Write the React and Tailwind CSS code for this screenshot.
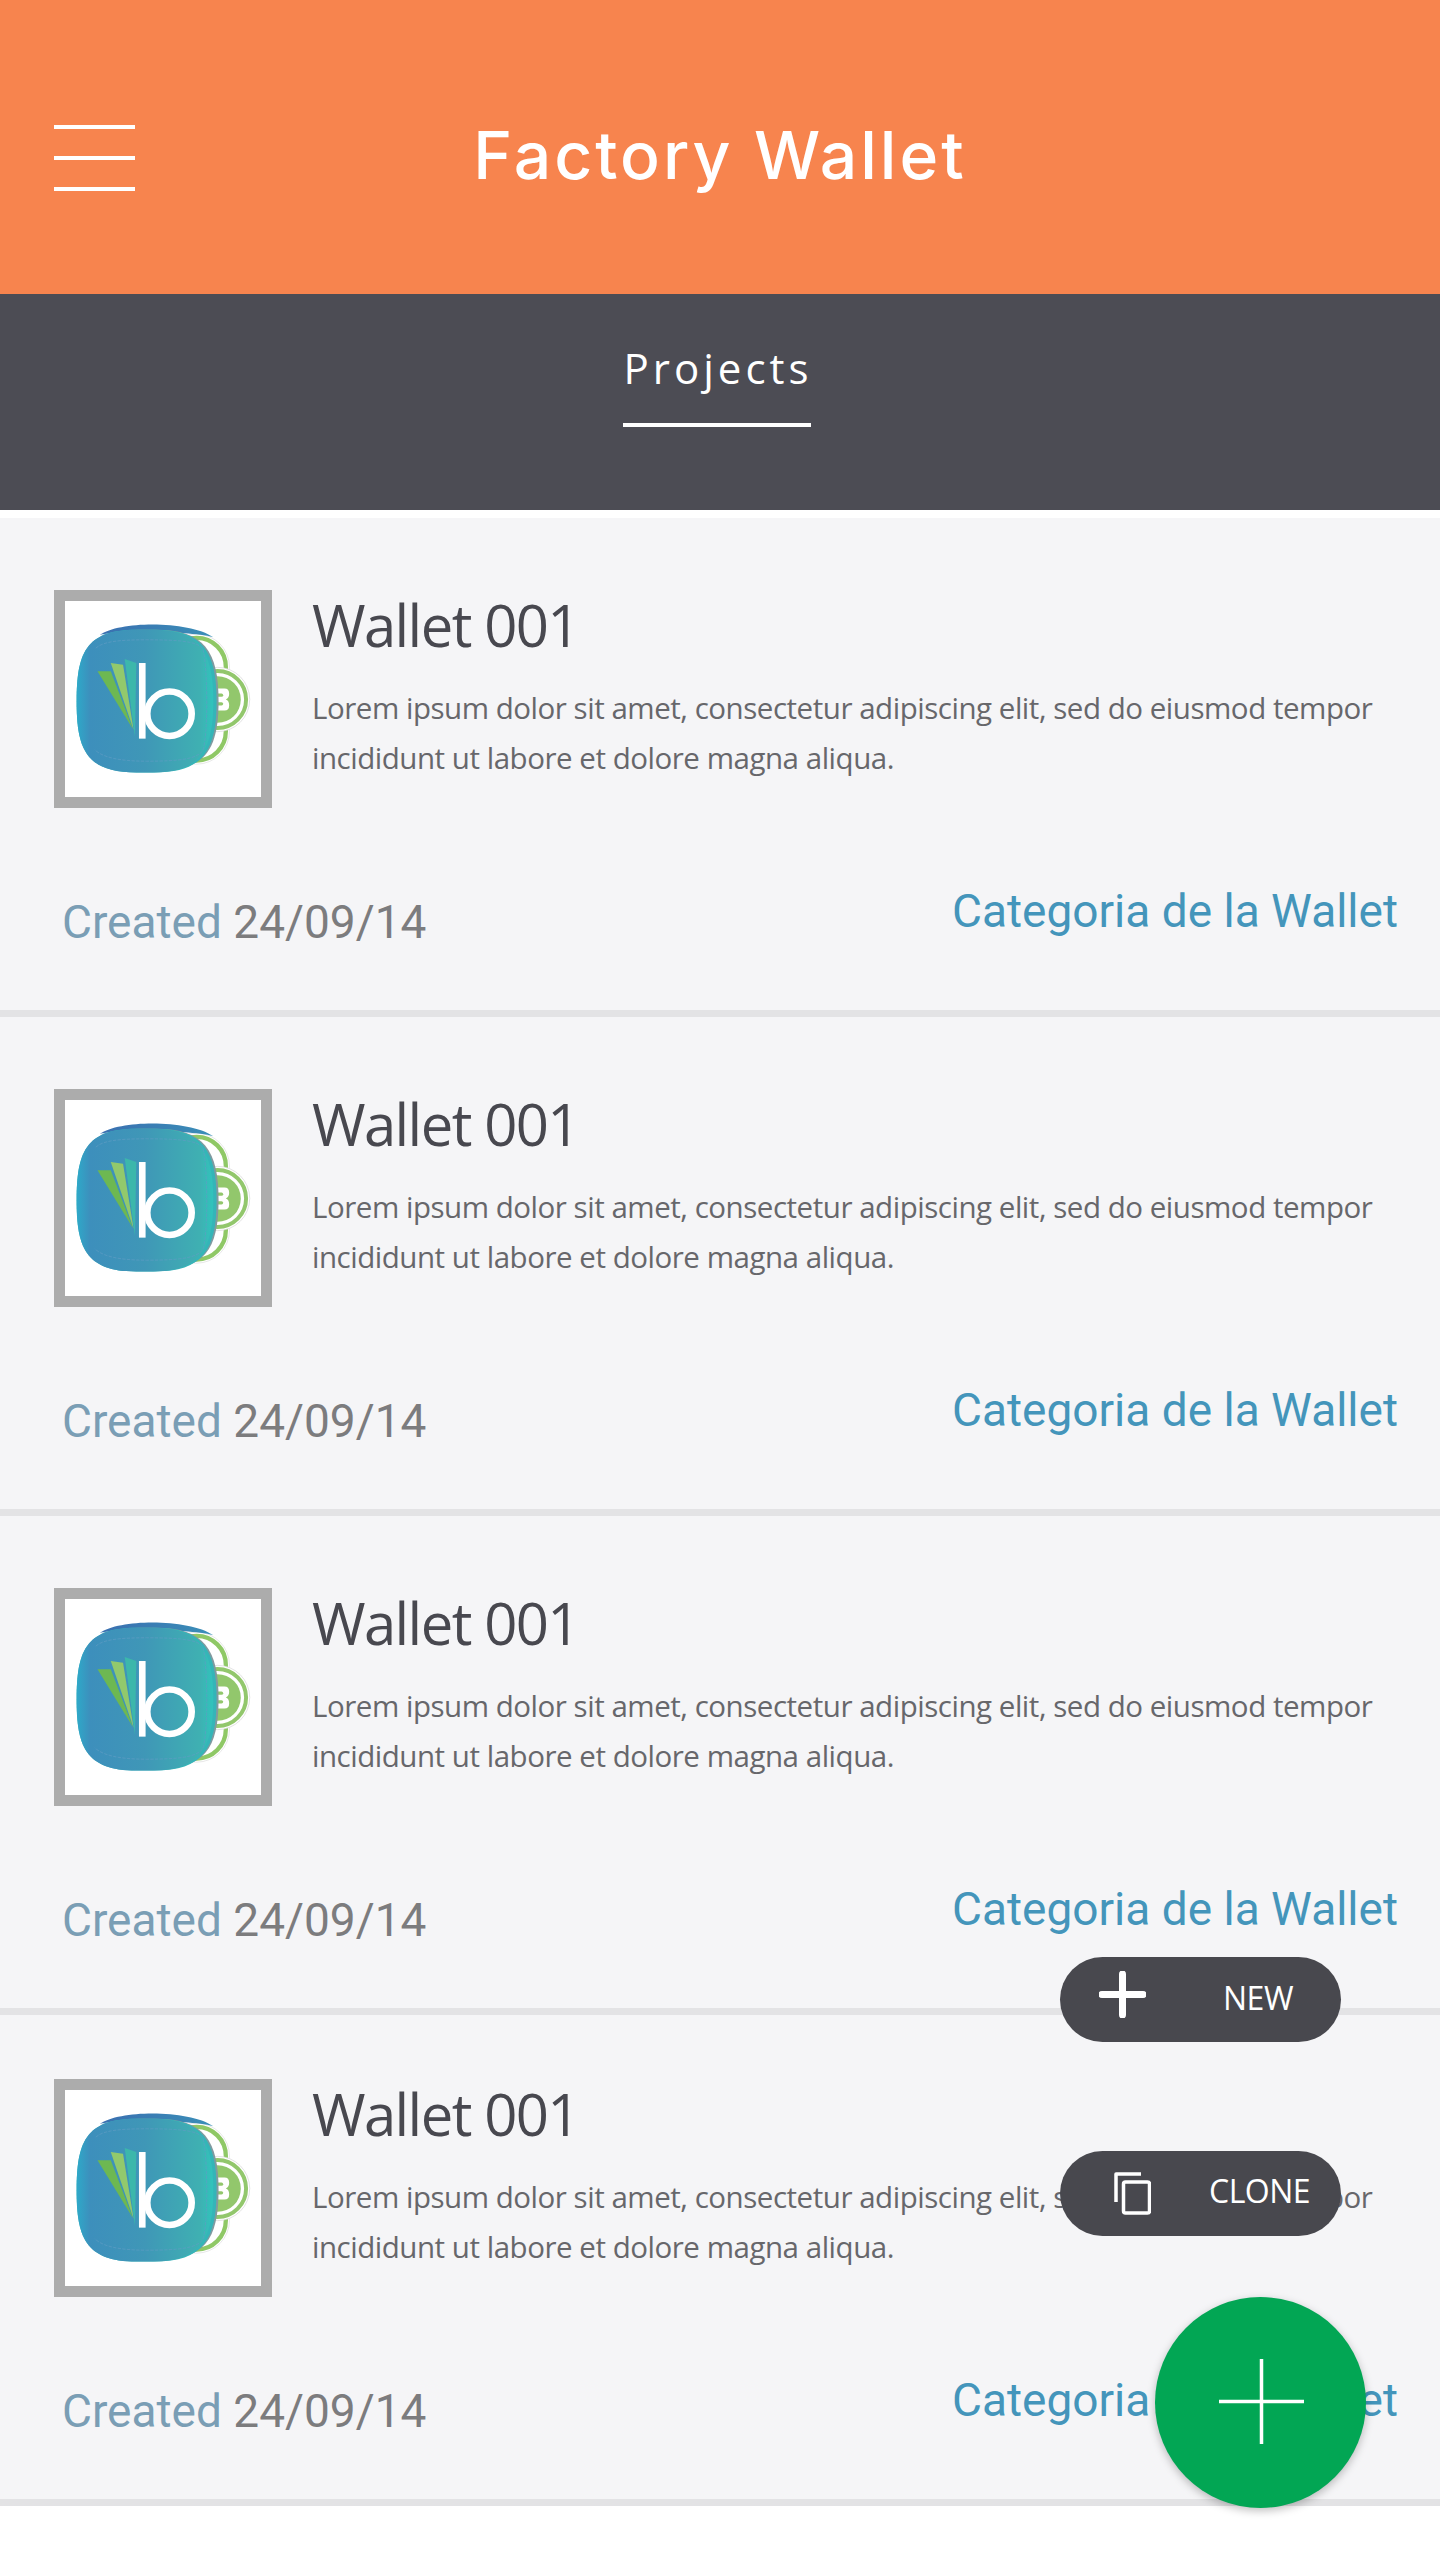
import React from "react";

function Logo() {
  return (
    <svg viewBox="75 63 591 591" className="block w-full h-full">
      <defs>
        <linearGradient id="wallet" x1="0" y1="0" x2="1" y2="0">
          <stop offset="0" stopColor="#2ea9c9" />
          <stop offset="0.1" stopColor="#3d8fbc" />
          <stop offset="0.5" stopColor="#3f97b7" />
          <stop offset="0.9" stopColor="#3fb0b2" />
          <stop offset="1" stopColor="#30c4bc" />
        </linearGradient>
        <linearGradient id="rim" x1="0" y1="0" x2="1" y2="0">
          <stop offset="0" stopColor="#3a6fb0" />
          <stop offset="1" stopColor="#3a8fb8" />
        </linearGradient>
      </defs>
      <circle cx="472" cy="262" r="99" fill="#fff" stroke="#dcdcdc" strokeWidth="2" />
      <circle cx="472" cy="262" r="88" fill="none" stroke="#8fc866" strokeWidth="13" />
      <circle cx="472" cy="456" r="99" fill="#fff" stroke="#dcdcdc" strokeWidth="2" />
      <circle cx="472" cy="456" r="88" fill="none" stroke="#8fc866" strokeWidth="13" />
      <circle cx="535" cy="360" r="97" fill="#fff" stroke="#d5d5d5" strokeWidth="2" />
      <circle cx="535" cy="360" r="86" fill="none" stroke="#92c76c" strokeWidth="12" />
      <circle cx="535" cy="360" r="70" fill="#92c76c" />
      <path d="M528 327H556Q570 327 570 343Q570 356 560 360Q570 364 570 377Q570 393 556 393H528Z" fill="#fff" />
      <rect x="528" y="342" width="24" height="10" rx="5" fill="#92c76c" />
      <rect x="528" y="368" width="24" height="10" rx="5" fill="#92c76c" />
      <path d="M180 165C240 122 450 122 522 172C450 155 260 150 180 165Z" fill="url(#rim)" />
      <path d="M130 365C130 225 150 150 310 150H350C495 150 538 215 538 365C538 515 495 575 350 575H310C150 575 130 505 130 365Z" fill="#7f9aa0" />
      <path d="M110 365C110 225 135 150 290 150H345C490 150 532 215 532 365C532 515 490 580 345 580H290C135 580 110 505 110 365Z" fill="#34b5b8" />
      <path d="M110 365C110 225 135 150 290 150H340C480 150 522 215 522 365C522 515 480 580 340 580H290C135 580 110 505 110 365Z" fill="url(#wallet)" />
      <path d="M168 205C190 185 240 180 320 180C420 180 470 185 490 205C505 250 508 470 490 515C470 540 420 546 320 546C240 546 190 535 165 512" fill="none" stroke="#5f9dc4" strokeWidth="2" strokeDasharray="10 4" />
      <polygon points="173,275 213,275 280,450" fill="#6db852" />
      <polygon points="213,250 250,255 282,452" fill="#92c96c" />
      <polygon points="255,238 290,250 286,472" fill="#3cb7ab" />
      <rect x="298" y="250" width="20" height="228" fill="#fff" />
      <circle cx="390" cy="403" r="67" fill="none" stroke="#fff" strokeWidth="20" />
    </svg>
  );
}

function Card({ top }) {
  return (
    <div className={`${top} border-b-[7px] border-[#e3e3e5] bg-[#f5f5f7] pb-[61px]`}>
      <div className="flex pl-[54px] pr-[40px]">
        <div className="h-[218px] w-[218px] shrink-0 border-[11px] border-[#acacac] bg-white">
          <Logo />
        </div>
        <div className="ml-[40px] flex-1">
          <div className="mt-[3px] font-['Open_Sans'] text-[58px] leading-[64px] tracking-[-1.6px] text-[#48484f]">Wallet 001</div>
          <p className="mt-[26px] font-['Open_Sans'] text-[29.5px] leading-[50px] tracking-[-0.47px] text-[#67676b] whitespace-nowrap">
            Lorem ipsum dolor sit amet, consectetur adipiscing elit, sed do eiusmod tempor
            <br />
            incididunt ut labore et dolore magna aliqua.
          </p>
        </div>
      </div>
      <div className="mt-[76px] flex items-start justify-between pl-[62px] pr-[42px] font-['Roboto'] text-[46px] leading-[54px]">
        <div className="mt-[11px] whitespace-nowrap">
          <span className="text-[#7a9eb5]">Created</span> <span className="text-[#7c7c7e]">24/09/14</span>
        </div>
        <div className="whitespace-nowrap text-[#4495bb]">Categoria de la Wallet</div>
      </div>
    </div>
  );
}

export default function App() {
  return (
    <div className="relative h-[2560px] w-[1440px] overflow-hidden bg-white">
      <header className="relative flex h-[294px] items-center justify-center bg-[#f7844e]">
        <div className="absolute left-[54px] top-[125px] flex h-[66px] w-[81px] flex-col justify-between">
          <span className="h-[4px] bg-white" />
          <span className="h-[4px] bg-white" />
          <span className="h-[4px] bg-white" />
        </div>
        <h1 className="mt-[16px] font-['Inter'] text-[66px] font-medium leading-none tracking-[3px] text-white">Factory Wallet</h1>
      </header>
      <nav className="flex h-[216px] justify-center bg-[#4c4c54] pr-[6px]">
        <div className="mt-[47px] flex h-[86px] w-[188px] flex-col items-center justify-between">
          <span className="whitespace-nowrap pl-[2px] font-['Open_Sans'] text-[42px] leading-[54px] tracking-[4px] text-white">Projects</span>
          <span className="h-[4px] w-full bg-white" />
        </div>
      </nav>
      <main className="pt-[8px]">
        <Card top="pt-[72px]" />
        <Card top="pt-[72px]" />
        <Card top="pt-[72px]" />
        <Card top="pt-[64px]" />
      </main>

      <div className="absolute left-[1060px] top-[1957px] flex h-[85px] w-[281px] items-center rounded-full bg-[#48484e] text-white">
        <svg viewBox="0 0 47 47" className="absolute left-[39px] top-[14px] h-[47px] w-[47px]" fill="none" stroke="#fff" strokeWidth="7" strokeLinecap="round">
          <path d="M23.5 3V44M3 23.5H44" />
        </svg>
        <span className="absolute left-[163px] top-[19px] font-['Open_Sans'] text-[32px] leading-[44px] tracking-[-0.5px]">NEW</span>
      </div>
      <div className="absolute left-[1060px] top-[2151px] flex h-[85px] w-[281px] items-center rounded-full bg-[#48484e] text-white">
        <svg viewBox="0 0 37 43" className="absolute left-[54px] top-[21px] h-[43px] w-[37px]" fill="none" stroke="#fff" strokeWidth="3.5" strokeLinejoin="round">
          <path d="M2 30V2H27" />
          <rect x="9.5" y="10" width="26" height="31" rx="2" />
        </svg>
        <span className="absolute left-[149px] top-[18px] font-['Open_Sans'] text-[32px] leading-[44px] tracking-[-0.5px]">CLONE</span>
      </div>
      <div className="absolute left-[1155px] top-[2297px] h-[211px] w-[211px] rounded-full bg-[#02a654] shadow-[0_3px_8px_rgba(0,0,0,0.25)]">
        <svg viewBox="0 0 85 85" className="absolute left-[64px] top-[62px] h-[85px] w-[85px]" fill="none" stroke="#fff" strokeWidth="3.5">
          <path d="M42.5 0V85M0 42.5H85" />
        </svg>
      </div>
    </div>
  );
}
